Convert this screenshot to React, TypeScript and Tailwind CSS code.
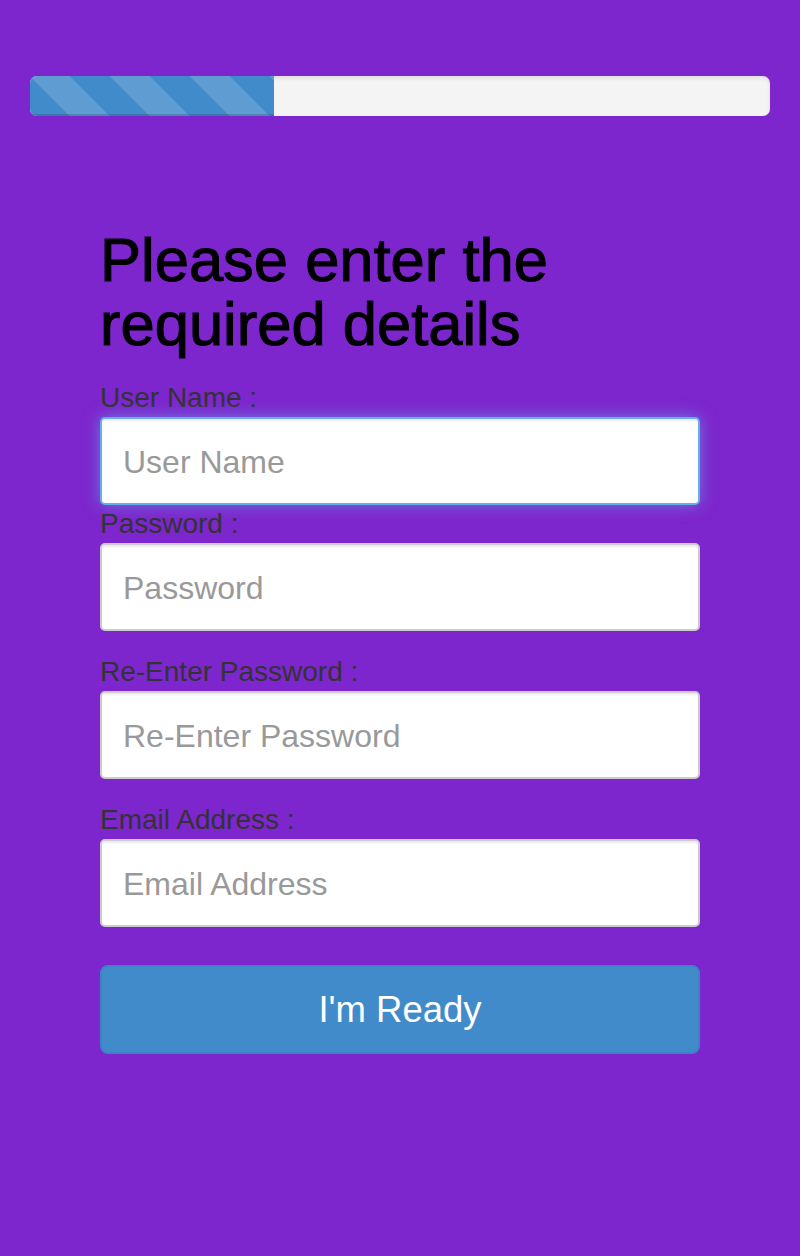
import React from "react";

const inputBase =
  "h-[88px] w-full rounded-[5px] border-2 bg-white pl-[21px] pr-5 pt-[2px] text-[32px] text-[#555] outline-none placeholder:text-[#999]";

export default function App() {
  return (
    <div className="min-h-[1256px] w-full bg-[#7d26cd] font-['Liberation_Sans',Arial,sans-serif]">
      <div className="px-[30px] pt-[76px]">
        <div className="h-[40px] w-full overflow-hidden rounded-[7px] bg-[#f4f4f4] shadow-[inset_0_2px_4px_rgba(0,0,0,0.1)]">
          <div className="h-full w-[244px] bg-[#428bca] bg-[linear-gradient(45deg,rgba(255,255,255,.15)_25%,transparent_25%,transparent_50%,rgba(255,255,255,.15)_50%,rgba(255,255,255,.15)_75%,transparent_75%,transparent)] bg-size-[80px_80px] shadow-[inset_0_-2px_0_rgba(0,0,0,0.15)]" />
        </div>
      </div>

      <div className="px-[100px] pt-[112px]">
        <h1 className="text-[61.5px] leading-[64px] font-normal text-black [-webkit-text-stroke:1.1px_black]">
          Please enter the
          <br />
          required details
        </h1>

        <form className="mt-[23px] flex flex-col" onSubmit={(e) => e.preventDefault()}>
          <label className="text-[28px] leading-[38px] text-[#333]">User Name :</label>
          <input
            placeholder="User Name"
            className={`${inputBase} border-[#66afe9] shadow-[inset_0_2px_2px_rgba(0,0,0,0.075),0_0_16px_rgba(102,175,233,0.6)]`}
          />

          <label className="text-[28px] leading-[38px] text-[#333]">Password :</label>
          <input
            type="password"
            placeholder="Password"
            className={`${inputBase} border-[#ccc] shadow-[inset_0_2px_2px_rgba(0,0,0,0.075)]`}
          />

          <label className="mt-[22px] text-[28px] leading-[38px] text-[#333]">Re-Enter Password :</label>
          <input
            type="password"
            placeholder="Re-Enter Password"
            className={`${inputBase} border-[#ccc] shadow-[inset_0_2px_2px_rgba(0,0,0,0.075)]`}
          />

          <label className="mt-[22px] text-[28px] leading-[38px] text-[#333]">Email Address :</label>
          <input
            type="email"
            placeholder="Email Address"
            className={`${inputBase} border-[#ccc] shadow-[inset_0_2px_2px_rgba(0,0,0,0.075)]`}
          />

          <button
            type="submit"
            className="mt-[38px] h-[89px] w-full rounded-[8px] border-2 border-[#3a84c4] bg-[#428bca] pt-[2px] text-[36.5px] text-white"
          >
            I'm Ready
          </button>
        </form>
      </div>
    </div>
  );
}
